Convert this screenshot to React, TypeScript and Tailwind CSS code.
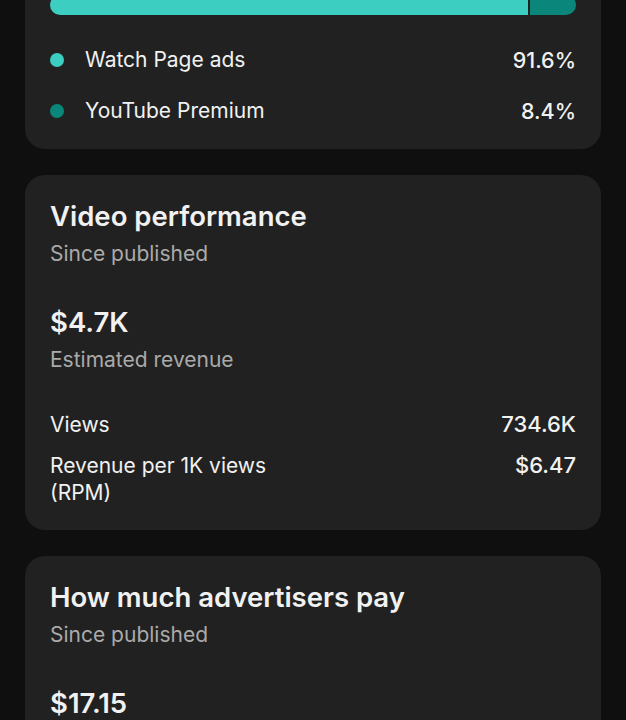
const font = { fontFamily: 'Inter, "Noto Sans", sans-serif' };

function LegendRow({ color, label, value }: { color: string; label: string; value: string }) {
  return (
    <div className="flex items-center justify-between h-[26px]">
      <div className="flex items-center">
        <span className={`w-[14px] h-[14px] rounded-full ${color}`} />
        <span className="ml-[21px] text-[21px] text-[#f1f1f1]">{label}</span>
      </div>
      <span className="text-[21.5px] font-medium text-[#f1f1f1]">{value}</span>
    </div>
  );
}

function Card({ children, className = '' }: { children: React.ReactNode; className?: string }) {
  return <div className={`bg-[#212121] rounded-[20px] px-[25px] ${className}`}>{children}</div>;
}

function CardHeader({ title }: { title: string }) {
  return (
    <>
      <div className="text-[27.5px] font-semibold leading-[30px] text-[#f1f1f1]">{title}</div>
      <div className="mt-[10px] text-[21px] leading-[26px] text-[#aaaaaa]">Since published</div>
    </>
  );
}

function Stat({ label, value }: { label: React.ReactNode; value: string }) {
  return (
    <div className="flex justify-between text-[21px] leading-[27px] text-[#f1f1f1]">
      <div>{label}</div>
      <div className="text-[22px] font-medium">{value}</div>
    </div>
  );
}

export default function App() {
  return (
    <div className="h-screen bg-[#0f0f0f] overflow-hidden px-[25px]" style={font}>
      <div className="flex flex-col gap-[26px]">
        <Card className="-mt-[31px] pt-[26px] pb-[25px]">
          <div className="flex h-[20px] gap-[2px] rounded-full overflow-hidden">
            <div className="bg-[#3ccfc1] w-[90.9%]" />
            <div className="bg-[#0a877a] flex-1" />
          </div>
          <div className="mt-[32px] flex flex-col gap-[25px]">
            <LegendRow color="bg-[#3ccfc1]" label="Watch Page ads" value="91.6%" />
            <LegendRow color="bg-[#0a877a]" label="YouTube Premium" value="8.4%" />
          </div>
        </Card>

        <Card className="pt-[26px] pb-[24px]">
          <CardHeader title="Video performance" />
          <div className="mt-[40px] text-[27.5px] font-semibold leading-[30px] text-[#f1f1f1]">$4.7K</div>
          <div className="mt-[10px] text-[21px] leading-[26px] text-[#aaaaaa]">Estimated revenue</div>
          <div className="mt-[38px] flex flex-col gap-[14px]">
            <Stat label="Views" value="734.6K" />
            <Stat label={<>Revenue per 1K views<br />(RPM)</>} value="$6.47" />
          </div>
        </Card>

        <Card className="pt-[26px] pb-[24px]">
          <CardHeader title="How much advertisers pay" />
          <div className="mt-[40px] text-[27.5px] font-semibold leading-[30px] text-[#f1f1f1]">$17.15</div>
        </Card>
      </div>
    </div>
  );
}
